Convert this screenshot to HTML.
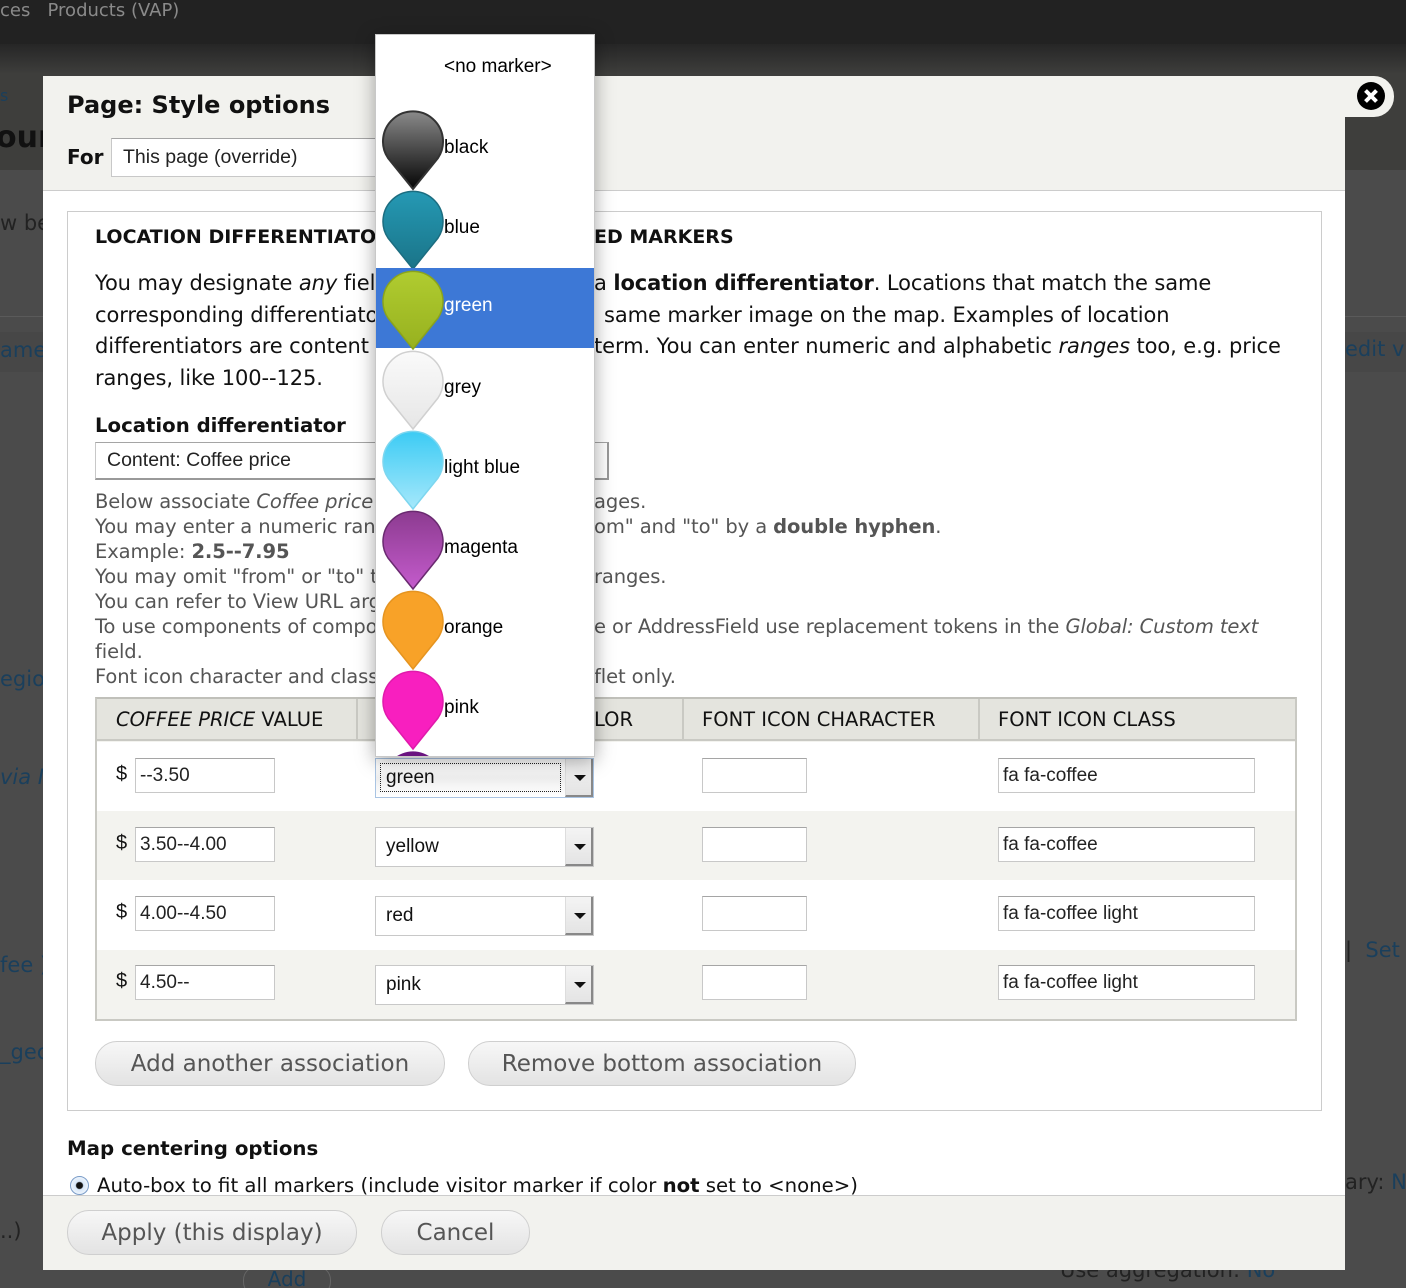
<!DOCTYPE html>
<html><head><meta charset="utf-8">
<style>
*{box-sizing:border-box;margin:0;padding:0}
html,body{width:1406px;height:1288px;overflow:hidden}
body{position:relative;background:#4b4b4b;font-family:"DejaVu Sans",sans-serif}
.a{position:absolute;white-space:nowrap}
.L{font-family:"Liberation Sans",Arial,sans-serif}
.p{font-size:21px;color:#111;line-height:32px;letter-spacing:-0.1px}
.d{font-size:19.5px;color:#555;line-height:25px;letter-spacing:-0.1px}
.inp{position:absolute;background:#fff;border:1px solid #c8c8c8;border-top-color:#a5a5a5;font-family:"Liberation Sans",Arial,sans-serif;font-size:19px;color:#222;padding-left:4px;display:flex;align-items:center}
.sel{position:absolute;background:#fff;border:1px solid #c8c8c8;font-family:"Liberation Sans",Arial,sans-serif;font-size:19px;color:#111;padding-left:10px;display:flex;align-items:center;width:219px;height:40px}
.sel .ar{position:absolute;right:0;top:0;bottom:0;width:28px;background:linear-gradient(#f4f4f4,#e4e4e4);border-left:1px solid #ddd;border-right:2px solid #888;border-bottom:2px solid #888}
.sel .ar:after{content:"";position:absolute;left:8px;top:16px;border-left:6px solid transparent;border-right:6px solid transparent;border-top:6px solid #111}
.btn{position:absolute;border:1px solid #cfcfcf;border-radius:22px;background:linear-gradient(#f7f7f7,#e3e3e3);color:#555;font-size:23px;display:flex;align-items:center;justify-content:center;height:45px}
.dd{position:absolute;left:375px;top:34px;width:220px;height:723px;background:#fff;border:1px solid #c8c8c8;box-shadow:0 4px 18px rgba(0,0,0,.35);overflow:hidden}
.it{position:absolute;left:0;width:218px;height:80px;font-family:"Liberation Sans",Arial,sans-serif;font-size:19px;color:#000}
.it svg{position:absolute;left:5px;top:-6px}
.it span{position:absolute;left:68px;top:22px}
</style></head><body>
<div class="a" style="left:0;top:0;width:1406px;height:44px;background:#222"></div>
<div class="a" style="left:0;top:44px;width:1406px;height:30px;background:linear-gradient(#262626,#3e3e3c)"></div>
<div class="a" style="left:0;top:74px;width:1406px;height:96px;background:#3e3e3c"></div>
<div class="a" style="left:0;top:316px;width:1406px;height:1px;background:#5a5a5a"></div>
<div class="a" style="left:0;top:332px;width:1406px;height:40px;background:#474747"></div>
<div class="a" style="left:0;top:0;font-size:18px;color:#8a8a8a">ces&nbsp;&nbsp;&nbsp;Products (VAP)</div>
<div class="a" style="left:0;top:86px;font-size:16px;color:#1a3f5c">s</div>
<div class="a" style="left:-4px;top:120px;font-size:30px;color:#111;font-weight:bold">our</div>
<div class="a" style="left:0;top:211px;font-size:21px;color:#222">w be</div>
<div class="a" style="left:0;top:338px;font-size:21px;color:#1a3f5c">amer</div>
<div class="a" style="left:0;top:667px;font-size:21px;color:#1a3f5c">egior</div>
<div class="a" style="left:0;top:765px;font-size:21px;color:#1a3f5c;font-style:italic">via IF</div>
<div class="a" style="left:0;top:953px;font-size:21px;color:#1a3f5c">fee )</div>
<div class="a" style="left:0;top:1040px;font-size:21px;color:#1a3f5c">_gec</div>
<div class="a" style="left:0;top:1219px;font-size:21px;color:#222">..)</div>
<div class="a" style="left:1345px;top:337px;font-size:21px;color:#1a3f5c">edit vi</div>
<div class="a" style="left:1345px;top:938px;font-size:21px;color:#1a3f5c"><span style="color:#222">|</span>&nbsp;&nbsp;Set</div>
<div class="a" style="left:1345px;top:1170px;font-size:21px;color:#222">ary: <span style="color:#1a3f5c">N</span></div>
<div class="a" style="left:1060px;top:1258px;font-size:21px;color:#222">Use aggregation: <span style="color:#1a3f5c">No</span></div>
<div class="a" style="left:243px;top:1266px;width:88px;height:30px;border:1px solid #666;border-radius:14px;font-size:20px;color:#1a3f5c;text-align:center">Add</div>

<div class="a" style="left:43px;top:76px;width:1302px;height:1194px;background:#fff"></div>
<div class="a" style="left:43px;top:76px;width:1302px;height:115px;background:#f2f2ee;border-bottom:1px solid #ccc"></div>
<div class="a" style="left:1340px;top:76px;width:54px;height:41px;background:#f2f2ee;border-radius:0 20px 20px 0"></div>
<svg class="a" style="left:1356px;top:81px" width="30" height="30" viewBox="0 0 30 30"><circle cx="15" cy="15" r="14" fill="#000"/><path d="M9.5 9.5L20.5 20.5M20.5 9.5L9.5 20.5" stroke="#fff" stroke-width="4"/></svg>
<div class="a" style="left:67px;top:91px;font-size:24px;font-weight:bold;color:#111">Page: Style options</div>
<div class="a" style="left:67px;top:145px;font-size:20px;font-weight:bold;color:#111">For</div>
<div class="inp" style="left:111px;top:138px;width:300px;height:39px;padding-left:11px;font-size:19.5px">This page (override)</div>

<div class="a" style="left:67px;top:211px;width:1255px;height:900px;border:1px solid #ccc"></div>
<div class="a" style="left:95px;top:226px;font-size:19px;font-weight:bold;color:#111">LOCATION DIFFERENTIATOR</div>
<div class="a" style="left:594px;top:226px;font-size:19px;font-weight:bold;color:#111;background:#fff">ED MARKERS</div>
<div class="a p" style="left:95px;top:267px">You may designate <i>any</i> field you have</div>
<div class="a p" style="left:594px;top:267px;background:#fff">a <b>location differentiator</b>. Locations that match the same</div>
<div class="a p" style="left:95px;top:299px">corresponding differentiator value</div>
<div class="a p" style="left:604px;top:299px;background:#fff">same marker image on the map. Examples of location</div>
<div class="a p" style="left:95px;top:330px">differentiators are content type,</div>
<div class="a p" style="left:594px;top:330px;background:#fff">term. You can enter numeric and alphabetic <i>ranges</i> too, e.g. price</div>
<div class="a p" style="left:95px;top:362px">ranges, like 100--125.</div>

<div class="a" style="left:95px;top:414px;font-size:19.7px;font-weight:bold;color:#111">Location differentiator</div>
<div class="inp" style="left:95px;top:442px;width:514px;height:38px;padding-left:11px;font-size:19.5px;border-right:2px solid #999;border-bottom:2px solid #999">Content: Coffee price</div>
<div class="a d" style="left:95px;top:489px">Below associate <i>Coffee price</i> values</div>
<div class="a d" style="left:594px;top:489px;background:#fff">ages.</div>
<div class="a d" style="left:95px;top:514px">You may enter a numeric range</div>
<div class="a d" style="left:594px;top:514px;background:#fff">om" and "to" by a <b>double hyphen</b>.</div>
<div class="a d" style="left:95px;top:539px">Example: <b>2.5--7.95</b></div>
<div class="a d" style="left:95px;top:564px">You may omit "from" or "to" to</div>
<div class="a d" style="left:594px;top:564px;background:#fff">ranges.</div>
<div class="a d" style="left:95px;top:589px">You can refer to View URL arguments</div>
<div class="a d" style="left:95px;top:614px">To use components of compound</div>
<div class="a d" style="left:594px;top:614px;background:#fff">e or AddressField use replacement tokens in the <i>Global: Custom text</i></div>
<div class="a d" style="left:95px;top:639px">field.</div>
<div class="a d" style="left:95px;top:664px">Font icon character and class</div>
<div class="a d" style="left:594px;top:664px;background:#fff">flet only.</div>

<div class="a" style="left:95px;top:697px;width:1202px;height:324px;border:2px solid #c9c9c3;border-top:2px solid #c0c0ba;background:#f3f3ef"></div>
<div class="a" style="left:97px;top:699px;width:1198px;height:42px;background:#e4e4de;border-bottom:2px solid #c9c9c3"></div>
<div class="a" style="left:356px;top:699px;width:2px;height:42px;background:#c9c9c3"></div>
<div class="a" style="left:682px;top:699px;width:2px;height:42px;background:#c9c9c3"></div>
<div class="a" style="left:978px;top:699px;width:2px;height:42px;background:#c9c9c3"></div>
<div class="a" style="left:116px;top:708px;font-size:19.5px;color:#111"><i>COFFEE PRICE</i> VALUE</div>
<div class="a" style="left:594px;top:708px;font-size:19.5px;color:#111">LOR</div>
<div class="a" style="left:702px;top:708px;font-size:19.5px;color:#111">FONT ICON CHARACTER</div>
<div class="a" style="left:998px;top:708px;font-size:19.5px;color:#111">FONT ICON CLASS</div>
<div class="a" style="left:97px;top:742px;width:1198px;height:69px;background:#fff"></div>
<div class="a" style="left:97px;top:880px;width:1198px;height:70px;background:#fff"></div>

<div class="a L" style="left:116px;top:763px;font-size:20px;color:#111">$</div>
<div class="a L" style="left:116px;top:832px;font-size:20px;color:#111">$</div>
<div class="a L" style="left:116px;top:901px;font-size:20px;color:#111">$</div>
<div class="a L" style="left:116px;top:970px;font-size:20px;color:#111">$</div>
<div class="inp" style="left:135px;top:758px;width:140px;height:35px">--3.50</div>
<div class="inp" style="left:135px;top:827px;width:140px;height:35px">3.50--4.00</div>
<div class="inp" style="left:135px;top:896px;width:140px;height:35px">4.00--4.50</div>
<div class="inp" style="left:135px;top:965px;width:140px;height:35px">4.50--</div>

<div class="sel" style="left:375px;top:758px;border-color:#a9c4e3;background:linear-gradient(#fff,#fff 20%,#eee 50%,#fff)"><span style="border:1px dotted #222;position:absolute;left:4px;top:4px;width:181px;height:29px"></span>green<div class="ar"></div></div>
<div class="sel" style="left:375px;top:827px">yellow<div class="ar"></div></div>
<div class="sel" style="left:375px;top:896px">red<div class="ar"></div></div>
<div class="sel" style="left:375px;top:965px">pink<div class="ar"></div></div>

<div class="inp" style="left:702px;top:758px;width:105px;height:35px"></div>
<div class="inp" style="left:702px;top:827px;width:105px;height:35px"></div>
<div class="inp" style="left:702px;top:896px;width:105px;height:35px"></div>
<div class="inp" style="left:702px;top:965px;width:105px;height:35px"></div>
<div class="inp" style="left:998px;top:758px;width:257px;height:35px">fa fa-coffee</div>
<div class="inp" style="left:998px;top:827px;width:257px;height:35px">fa fa-coffee</div>
<div class="inp" style="left:998px;top:896px;width:257px;height:35px">fa fa-coffee light</div>
<div class="inp" style="left:998px;top:965px;width:257px;height:35px">fa fa-coffee light</div>

<div class="btn" style="left:95px;top:1041px;width:350px">Add another association</div>
<div class="btn" style="left:468px;top:1041px;width:388px">Remove bottom association</div>

<div class="a" style="left:67px;top:1137px;font-size:19.8px;font-weight:bold;color:#111">Map centering options</div>
<div class="a" style="left:70px;top:1176px;width:19px;height:19px;border-radius:50%;border:1px solid #7a9cc8;background:radial-gradient(circle,#111 0 3px,#d6e6f8 4px,#fff)"></div>
<div class="a" style="left:97px;top:1174px;font-size:19.7px;color:#111">Auto-box to fit all markers (include visitor marker if color <b>not</b> set to &lt;none&gt;)</div>

<div class="a" style="left:43px;top:1195px;width:1302px;height:75px;background:#f2f2ee;border-top:1px solid #ccc"></div>
<div class="btn" style="left:67px;top:1210px;width:290px">Apply (this display)</div>
<div class="btn" style="left:381px;top:1210px;width:149px">Cancel</div>

<svg width="0" height="0" style="position:absolute"><defs>
<linearGradient id="gk" x1="0" y1="0" x2="0" y2="1"><stop offset="0" stop-color="#8a8a8a"/><stop offset="1" stop-color="#050505"/></linearGradient>
<linearGradient id="gb" x1="0" y1="0" x2="0" y2="1"><stop offset="0" stop-color="#2599b4"/><stop offset="1" stop-color="#1a7488"/></linearGradient>
<linearGradient id="gg" x1="0" y1="0" x2="0" y2="1"><stop offset="0" stop-color="#b0cc30"/><stop offset="1" stop-color="#97b11f"/></linearGradient>
<linearGradient id="gy" x1="0" y1="0" x2="0" y2="1"><stop offset="0" stop-color="#fafafa"/><stop offset="1" stop-color="#e6e6e6"/></linearGradient>
<linearGradient id="gl" x1="0" y1="0" x2="0" y2="1"><stop offset="0" stop-color="#3ccbf4"/><stop offset="1" stop-color="#a6e8fb"/></linearGradient>
<linearGradient id="gm" x1="0" y1="0" x2="0" y2="1"><stop offset="0" stop-color="#8c3b90"/><stop offset="1" stop-color="#c45bcc"/></linearGradient>
</defs></svg>
<div class="dd">
<div class="it" style="top:0"><span style="left:68px;top:21px">&lt;no marker&gt;</span></div>
<div class="it" style="top:80px"><svg width="64" height="84" viewBox="-1 -1 64 84"><path d="M31 79L6 48A30 30 0 1 1 56 48Z" fill="url(#gk)" stroke="#333" stroke-width="2"/></svg><span>black</span></div>
<div class="it" style="top:160px"><svg width="64" height="84" viewBox="-1 -1 64 84"><path d="M31 79L6 48A30 30 0 1 1 56 48Z" fill="url(#gb)" stroke="#1c6d80" stroke-width="1.5"/></svg><span>blue</span></div>
<div class="it" style="top:233px;height:80px;background:#3d78d6;color:#fff"><svg width="64" height="84" viewBox="-1 -1 64 84" style="top:1px"><path d="M31 79L6 48A30 30 0 1 1 56 48Z" fill="url(#gg)" stroke="#8aa31c" stroke-width="1.5"/></svg><span style="top:27px">green</span></div>
<div class="it" style="top:320px"><svg width="64" height="84" viewBox="-1 -1 64 84"><path d="M31 79L6 48A30 30 0 1 1 56 48Z" fill="url(#gy)" stroke="#d0d0d0" stroke-width="1.5"/></svg><span>grey</span></div>
<div class="it" style="top:400px"><svg width="64" height="84" viewBox="-1 -1 64 84"><path d="M31 79L6 48A30 30 0 1 1 56 48Z" fill="url(#gl)" stroke="#7dd6ef" stroke-width="1.5"/></svg><span>light blue</span></div>
<div class="it" style="top:480px"><svg width="64" height="84" viewBox="-1 -1 64 84"><path d="M31 79L6 48A30 30 0 1 1 56 48Z" fill="url(#gm)" stroke="#6a2a70" stroke-width="1.5"/></svg><span>magenta</span></div>
<div class="it" style="top:560px"><svg width="64" height="84" viewBox="-1 -1 64 84"><path d="M31 79L6 48A30 30 0 1 1 56 48Z" fill="#f8a228" stroke="#e59420" stroke-width="1.5"/></svg><span>orange</span></div>
<div class="it" style="top:640px"><svg width="64" height="84" viewBox="-1 -1 64 84"><path d="M31 79L6 48A30 30 0 1 1 56 48Z" fill="#f81fbf" stroke="#e01aab" stroke-width="1.5"/></svg><span>pink</span></div>
<div class="it" style="top:720px"><svg width="64" height="84" viewBox="-1 -1 64 84"><path d="M31 79L6 48A30 30 0 1 1 56 48Z" fill="#6a1480"/></svg></div>
</div>
</body></html>
